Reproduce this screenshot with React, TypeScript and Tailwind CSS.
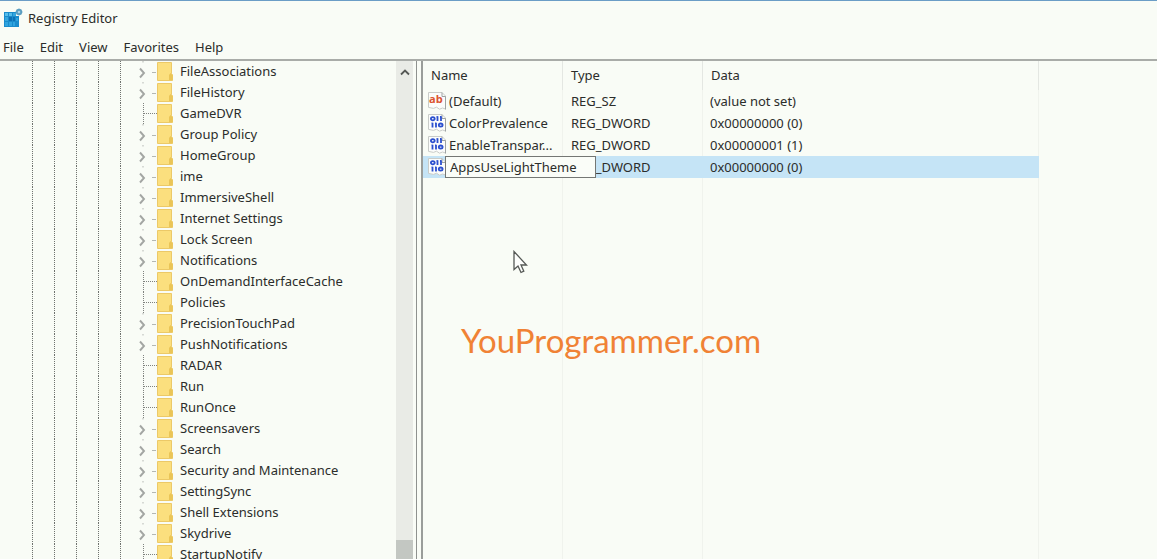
import { useState } from 'react';

type TreeItem = { name: string; leaf?: boolean };

const ITEMS: TreeItem[] = [
  { name: 'FileAssociations' },
  { name: 'FileHistory' },
  { name: 'GameDVR', leaf: true },
  { name: 'Group Policy' },
  { name: 'HomeGroup' },
  { name: 'ime' },
  { name: 'ImmersiveShell' },
  { name: 'Internet Settings' },
  { name: 'Lock Screen' },
  { name: 'Notifications' },
  { name: 'OnDemandInterfaceCache', leaf: true },
  { name: 'Policies', leaf: true },
  { name: 'PrecisionTouchPad' },
  { name: 'PushNotifications' },
  { name: 'RADAR', leaf: true },
  { name: 'Run', leaf: true },
  { name: 'RunOnce', leaf: true },
  { name: 'Screensavers' },
  { name: 'Search' },
  { name: 'Security and Maintenance' },
  { name: 'SettingSync' },
  { name: 'Shell Extensions' },
  { name: 'Skydrive' },
  { name: 'StartupNotify', leaf: true },
];

const VALUES = [
  { name: '(Default)', type: 'REG_SZ', data: '(value not set)' },
  { name: 'ColorPrevalence', type: 'REG_DWORD', data: '0x00000000 (0)' },
  { name: 'EnableTranspar...', type: 'REG_DWORD', data: '0x00000001 (1)' },
];

function RegistryIcon() {
  return (
    <svg className="size-5 shrink-0" viewBox="0 0 20 20" aria-hidden="true">
      <path d="M1 4h12v4h3v11H1z" fill="#1a8ccc" />
      <path d="M2 5h3v3H2zM6 5h3v3H6z" fill="#55bdea" />
      <path d="M10 5h3v3h-3zM2 9h3v4H2z" fill="#36a7de" />
      <path d="M6 9h3v4H6zM10 9h2v4h-2z" fill="#0d70b5" />
      <path d="M2 14h3v4H2zM6 14h3v4H6zM10 14h2v4h-2zM13 10h2v3h-2z" fill="#2fa4df" />
      <path d="M16 0.500l2.500 1 1 2.500-1 2.500-2.500 1-2.500-1-1-2.500 1-2.500z" fill="#5a9dc0" />
      <circle cx="16" cy="4" r="1.300" fill="#a8d2e6" />
    </svg>
  );
}

function Folder() {
  return (
    <svg className="h-[19px] w-4 shrink-0" viewBox="0 0 16 19" aria-hidden="true">
      <path d="M0.5 0.5h14v11l1 1.500v5.500h-15z" fill="#fbdf7e" stroke="#ecc967" />
      <path d="M12 18v-5l1.500-2 2 2v5z" fill="#eac557" />
    </svg>
  );
}

function ValueIcon({ kind }: { kind: string }) {
  return (
    <svg className="h-[18px] w-[18px] shrink-0" viewBox="0 0 18 18" aria-hidden="true">
      <path d="M0.500 0.500H14l3.500 3.500v13l-3-1-3 1.200-3-2-3 1.200-5-1z" fill="#fbfcfb" stroke="#c9ccc9" />
      <path d="M14 0.500v4h3.500v13" fill="none" stroke="#9ea3a3" />
      {kind === 'REG_SZ' ? (
        <text x="1" y="11" fontSize="11" fontWeight="700" fontFamily="Open Sans, sans-serif" fill="#dc5330">ab</text>
      ) : (
        <g fill="none" stroke="#2b50cf" strokeWidth="1.800">
          <ellipse cx="4.800" cy="4.700" rx="1.900" ry="1.600" />
          <path d="M9.500 2.300v4.800M13 2.300v4.800M8.500 3h1M12 3h1" />
          <path d="M4.500 8.700v4.800M8 8.700v4.800M3.500 9.400h1M7 9.400h1" />
          <ellipse cx="12.700" cy="11.100" rx="1.900" ry="1.600" />
        </g>
      )}
    </svg>
  );
}

function TreeRow({ item }: { item: TreeItem }) {
  return (
    <li className="flex h-[21px] shrink-0 items-center" role="treeitem">
      <span className="flex h-full w-[134px] shrink-0 pl-8" aria-hidden="true">
        {[0, 1, 2, 3, 4].map((n) => (
          <span key={n} className="h-full w-[22px] shrink-0 border-l border-dotted border-[#6f726e]" />
        ))}
      </span>
      {item.leaf ? (
        <span className="flex h-full w-[23px] items-center pl-[9px]" aria-hidden="true">
          <span className="h-full border-l border-dotted border-[#7f827e]" />
          <span className="grow border-t border-dotted border-[#7f827e]" />
        </span>
      ) : (
        <button className="flex h-full w-[23px] items-center pl-1" aria-label={`Expand ${item.name}`}>
          <svg className="h-[21px] w-[19px]" viewBox="0 0 19 21" fill="none" aria-hidden="true">
            <path d="M2 7.500l4 4.500-4 4.500" stroke="#a3a6a3" strokeWidth="1.900" />
            <path d="M5 0v1.500M14 11.500h4" stroke="#b4b7b3" />
          </svg>
        </button>
      )}
      <Folder />
      <span className="pb-0.5 pl-[7px] whitespace-nowrap">{item.name}</span>
    </li>
  );
}

export default function App() {
  const [name, setName] = useState('AppsUseLightTheme');
  return (
    <div className="relative flex h-screen flex-col overflow-hidden border-t border-[#6b9dc6] bg-[#f9fcf6] font-['Noto_Sans',sans-serif] text-[13px] leading-5 text-[#2b2d2b]">
      <header className="flex h-[34px] shrink-0 items-center gap-[5px] pl-[3px]">
        <RegistryIcon />
        <h1>Registry Editor</h1>
      </header>
      <nav className="flex h-[26px] shrink-0 items-center gap-4 border-b-2 border-[#a9aca8] pl-[3px]">
        <button>File</button>
        <button>Edit</button>
        <button>View</button>
        <button>Favorites</button>
        <button>Help</button>
      </nav>
      <main className="flex min-h-0 grow">
        <section className="flex w-[417px] shrink-0 border-r border-[#8f928f] pr-[3px]" aria-label="Keys">
          <ul className="flex min-w-0 grow flex-col overflow-hidden" role="tree">
            {ITEMS.map((item) => (
              <TreeRow key={item.name} item={item} />
            ))}
          </ul>
          <div className="flex w-[17px] shrink-0 flex-col justify-between bg-[#e9ebe6]">
            <button className="flex h-[22px] items-center justify-center" aria-label="Scroll up">
              <svg className="size-3" viewBox="0 0 12 12" fill="none" aria-hidden="true">
                <path d="M2 8.500l4-4 4 4" stroke="#555855" strokeWidth="1.800" />
              </svg>
            </button>
            <div className="h-[19px] bg-[#c3c7c2]" />
          </div>
        </section>
        <section className="ml-1 min-w-0 grow border-l-2 border-[#9a9d9a]" aria-label="Values">
          <table className="h-full w-[616px] table-fixed border-separate border-spacing-0 text-left">
            <colgroup>
              <col className="w-[140px]" />
              <col className="w-[140px]" />
              <col />
            </colgroup>
            <thead>
              <tr className="h-[29px]">
                {['Name', 'Type', 'Data'].map((h) => (
                  <th key={h} className="border-r border-[#e4e7e2] p-0 pb-0.5 pl-2 font-normal">{h}</th>
                ))}
              </tr>
            </thead>
            <tbody>
              {VALUES.map((v) => (
                <tr key={v.name} className="h-[22px]">
                  <td className="border-r border-[#f0f3ed] p-0 pl-[5px]">
                    <span className="flex items-center gap-[3px] whitespace-nowrap">
                      <ValueIcon kind={v.type} />
                      {v.name}
                    </span>
                  </td>
                  <td className="border-r border-[#f0f3ed] p-0 pl-2">{v.type}</td>
                  <td className="border-r border-[#f0f3ed] p-0 pl-[7px]">{v.data}</td>
                </tr>
              ))}
              <tr className="h-[22px] bg-[#c5e4f6]">
                <td className="p-0 pl-[5px]">
                  <span className="flex items-center">
                    <ValueIcon kind="REG_DWORD" />
                    <input
                      className="relative z-10 -ml-px h-[22px] w-[151px] shrink-0 border border-[#747774] bg-[#fafdf8] px-1 outline-none"
                      aria-label="Value name"
                      value={name}
                      onChange={(e) => setName(e.target.value)}
                    />
                  </span>
                </td>
                <td className="p-0 pl-2">REG_DWORD</td>
                <td className="p-0 pl-[7px]">0x00000000 (0)</td>
              </tr>
              <tr aria-hidden="true">
                <td className="border-r border-[#f0f3ed]" />
                <td className="border-r border-[#f0f3ed]" />
                <td className="border-r border-[#f0f3ed]" />
              </tr>
            </tbody>
          </table>
        </section>
      </main>
      <svg className="absolute top-[249px] left-[513px] h-6 w-4" viewBox="0 0 16 24" aria-hidden="true">
        <path d="M1 1.500v18l4-3.500 3 6.500 2.800-1.300-2.800-6.200h5.500z" fill="#fdfefc" stroke="#565956" strokeWidth="1.300" />
      </svg>
      <p className="absolute top-[319px] left-[461px] font-[Lato,sans-serif] text-[33px] leading-10 text-[#f08235]">YouProgrammer.com</p>
    </div>
  );
}
